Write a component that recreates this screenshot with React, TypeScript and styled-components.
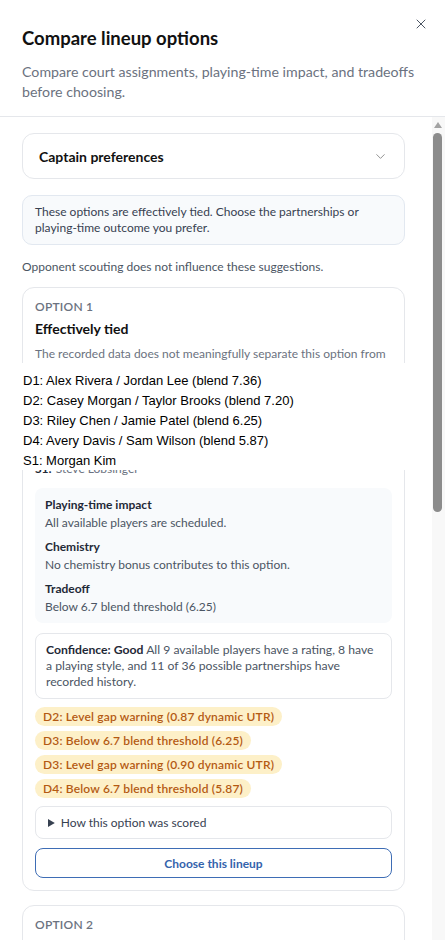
import React from 'react'
import styled, { createGlobalStyle } from 'styled-components'
import { X, ChevronDown } from 'lucide-react'

const GlobalStyle = createGlobalStyle`
  html, body {
    margin: 0;
    padding: 0;
    background: #ffffff;
  }
  body {
    font-family: 'Lato', 'Noto Sans', sans-serif;
    color: #111827;
  }
  * {
    box-sizing: border-box;
  }
`

const Dialog = styled.div`
  height: 100vh;
  display: flex;
  flex-direction: column;
  background: #ffffff;
  overflow: hidden;
`

const Header = styled.header`
  position: relative;
  padding: 24px 22px 14px;
  border-bottom: 1px solid #e5e7eb;
  flex-shrink: 0;
`

const Title = styled.h2`
  margin: 0 0 10px;
  font-size: 18.5px;
  line-height: 28px;
  font-weight: 700;
  color: #111111;
`

const Description = styled.p`
  margin: 0;
  font-size: 14.2px;
  line-height: 20px;
  color: #6b7280;
`

const CloseButton = styled.button`
  position: absolute;
  top: 15px;
  right: 15px;
  width: 18px;
  height: 18px;
  padding: 0;
  border: none;
  background: none;
  color: #4b5563;
  display: flex;
  align-items: center;
  justify-content: center;
  cursor: pointer;
`

const Body = styled.div`
  flex: 1;
  min-height: 0;
  display: flex;
`

const ScrollArea = styled.div`
  flex: 1;
  min-width: 0;
  overflow: hidden;
  padding: 16px 27px 24px 22px;
  display: flex;
  flex-direction: column;
`

const Rail = styled.div`
  width: 13px;
  flex-shrink: 0;
  background: #f8f8f8;
  display: flex;
  flex-direction: column;
  align-items: center;
  padding-top: 5px;
`

const RailArrow = styled.svg`
  display: block;
  margin-left: -1px;
`

const Thumb = styled.div`
  margin-top: 5px;
  margin-left: -2px;
  width: 9px;
  height: 379px;
  border-radius: 5px;
  background: #8c8c8c;
`

const PreferencesToggle = styled.button`
  width: 100%;
  height: 46px;
  padding: 0 16px 0 16px;
  border: 1px solid #e5e7eb;
  border-radius: 12px;
  background: #ffffff;
  display: flex;
  align-items: center;
  justify-content: space-between;
  font-family: inherit;
  font-size: 14px;
  font-weight: 700;
  color: #111111;
  cursor: pointer;
  flex-shrink: 0;

  svg {
    color: #8b8b8b;
  }
`

const Notice = styled.div`
  margin-top: 16px;
  padding: 8px 12px;
  border: 1px solid #e2e8f0;
  border-radius: 10px;
  background: #f8fafc;
  font-size: 12px;
  line-height: 16px;
  color: #374151;
`

const Note = styled.p`
  margin: 14px 0 12px;
  font-size: 12px;
  line-height: 16px;
  color: #4b5563;
`

const OptionCard = styled.article`
  position: relative;
  padding: 11px 12px 12px;
  border: 1px solid #e5e7eb;
  border-radius: 12px;
  background: #ffffff;
  display: flex;
  flex-direction: column;
  flex-shrink: 0;

  & + & {
    margin-top: 14px;
  }
`

const OptionLabel = styled.div`
  font-size: 12px;
  line-height: 16px;
  font-weight: 600;
  letter-spacing: 0.02em;
  text-transform: uppercase;
  color: #6b7280;
`

const OptionTitle = styled.h3`
  margin: 4px 0 0;
  font-size: 14px;
  line-height: 20px;
  font-weight: 700;
  color: #111111;
`

const OptionSummary = styled.p`
  margin: 6px 0 0;
  font-size: 12px;
  line-height: 17px;
  color: #6b7280;
`

const LineupList = styled.ul`
  list-style: none;
  margin: 4px 0 0;
  padding: 0;
`

const LineupRow = styled.li`
  font-size: 12px;
  line-height: 19px;
  color: #6b7280;

  b {
    color: #1f2937;
    font-weight: 700;
    margin-right: 4px;
  }
`

const ImpactPanel = styled.div`
  margin-top: 10px;
  padding: 8px 10px 7px;
  border-radius: 8px;
  background: #f8fafc;
  display: flex;
  flex-direction: column;
  gap: 6px;
`

const ImpactItem = styled.div`
  font-size: 12px;
  line-height: 18px;
`

const ImpactTitle = styled.div`
  font-weight: 700;
  color: #1f2937;
`

const ImpactText = styled.div`
  color: #4b5563;
`

const ConfidenceBox = styled.div`
  margin-top: 10px;
  padding: 8px 10px;
  border: 1px solid #e5e7eb;
  border-radius: 8px;
  font-size: 12.2px;
  line-height: 16px;
  color: #4b5563;

  b {
    color: #1f2937;
    font-weight: 700;
  }
`

const WarningList = styled.div`
  margin-top: 8px;
  display: flex;
  flex-direction: column;
  align-items: flex-start;
  gap: 5px;
`

const WarningPill = styled.span`
  display: inline-block;
  padding: 0 8px;
  height: 19px;
  line-height: 19px;
  border-radius: 10px;
  background: #fdf0c8;
  color: #b45a13;
  font-size: 12px;
  font-weight: 600;
  letter-spacing: 0.17px;
`

const ScoreDetails = styled.details`
  margin-top: 8px;
  padding: 8px 12px 7px;
  border: 1px solid #e5e7eb;
  border-radius: 8px;
  font-size: 12px;
  line-height: 16px;
  color: #374151;

  summary {
    cursor: pointer;
  }
`

const ChooseButton = styled.button`
  margin-top: 9px;
  width: 100%;
  height: 30px;
  border: 1px solid #3e6db5;
  border-radius: 8px;
  background: #ffffff;
  color: #3463ac;
  font-family: inherit;
  font-size: 12px;
  font-weight: 700;
  cursor: pointer;
`

// debug list that sits over the first card
const LineupOverlay = styled.div`
  position: absolute;
  top: 75px;
  left: -22px;
  width: 420px;
  height: 107px;
  padding: 8px 0 0 22px;
  background: #ffffff;
  font-family: 'Liberation Sans', Arial, sans-serif;
  font-size: 13px;
  line-height: 20px;
  color: #000000;
`

interface OptionData {
  label: string
  title: string
  summary: string
  lineup: [string, string][]
  playingTime: string
  chemistry: string
  tradeoff: string
  confidence: string
  confidenceText: string
  warnings: string[]
}

const options: OptionData[] = [
  {
    label: 'Option 1',
    title: 'Effectively tied',
    summary:
      'The recorded data does not meaningfully separate this option from the others.',
    lineup: [
      ['D1:', 'Alex Rivera'],
      ['D2:', 'Casey Morgan'],
      ['D3:', 'Riley Chen'],
      ['D4:', 'Avery Davis'],
      ['S1:', 'Steve Lobsinger'],
    ],
    playingTime: 'All available players are scheduled.',
    chemistry: 'No chemistry bonus contributes to this option.',
    tradeoff: 'Below 6.7 blend threshold (6.25)',
    confidence: 'Good',
    confidenceText:
      'All 9 available players have a rating, 8 have a playing style, and 11 of 36 possible partnerships have recorded history.',
    warnings: [
      'D2: Level gap warning (0.87 dynamic UTR)',
      'D3: Below 6.7 blend threshold (6.25)',
      'D3: Level gap warning (0.90 dynamic UTR)',
      'D4: Below 6.7 blend threshold (5.87)',
    ],
  },
  {
    label: 'Option 2',
    title: 'Effectively tied',
    summary:
      'The recorded data does not meaningfully separate this option from the others.',
    lineup: [
      ['D1:', 'Alex Rivera / Casey Morgan'],
      ['D2:', 'Jordan Lee / Taylor Brooks'],
      ['D3:', 'Riley Chen / Sam Wilson'],
      ['D4:', 'Avery Davis / Jamie Patel'],
      ['S1:', 'Steve Lobsinger'],
    ],
    playingTime: 'All available players are scheduled.',
    chemistry: 'No chemistry bonus contributes to this option.',
    tradeoff: 'Below 6.7 blend threshold (6.31)',
    confidence: 'Good',
    confidenceText:
      'All 9 available players have a rating, 8 have a playing style, and 11 of 36 possible partnerships have recorded history.',
    warnings: [
      'D3: Below 6.7 blend threshold (6.31)',
      'D4: Level gap warning (0.94 dynamic UTR)',
    ],
  },
]

const overlayLines = [
  'D1: Alex Rivera / Jordan Lee (blend 7.36)',
  'D2: Casey Morgan / Taylor Brooks (blend 7.20)',
  'D3: Riley Chen / Jamie Patel (blend 6.25)',
  'D4: Avery Davis / Sam Wilson (blend 5.87)',
  'S1: Morgan Kim',
]

const Option = ({ option, showOverlay }: { option: OptionData; showOverlay?: boolean }) => (
  <OptionCard>
    <OptionLabel>{option.label}</OptionLabel>
    <OptionTitle>{option.title}</OptionTitle>
    <OptionSummary>{option.summary}</OptionSummary>
    <LineupList>
      {option.lineup.map(([court, names]) => (
        <LineupRow key={court}>
          <b>{court}</b>
          {names}
        </LineupRow>
      ))}
    </LineupList>
    <ImpactPanel>
      <ImpactItem>
        <ImpactTitle>Playing-time impact</ImpactTitle>
        <ImpactText>{option.playingTime}</ImpactText>
      </ImpactItem>
      <ImpactItem>
        <ImpactTitle>Chemistry</ImpactTitle>
        <ImpactText>{option.chemistry}</ImpactText>
      </ImpactItem>
      <ImpactItem>
        <ImpactTitle>Tradeoff</ImpactTitle>
        <ImpactText>{option.tradeoff}</ImpactText>
      </ImpactItem>
    </ImpactPanel>
    <ConfidenceBox>
      <b>Confidence: {option.confidence}</b> {option.confidenceText}
    </ConfidenceBox>
    <WarningList>
      {option.warnings.map((w) => (
        <WarningPill key={w}>{w}</WarningPill>
      ))}
    </WarningList>
    <ScoreDetails>
      <summary>How this option was scored</summary>
    </ScoreDetails>
    <ChooseButton>Choose this lineup</ChooseButton>
    {showOverlay && (
      <LineupOverlay>
        {overlayLines.map((line) => (
          <div key={line}>{line}</div>
        ))}
      </LineupOverlay>
    )}
  </OptionCard>
)

const App = () => {
  return (
    <>
      <GlobalStyle />
      <Dialog>
        <Header>
          <Title>Compare lineup options</Title>
          <Description>
            Compare court assignments, playing-time impact, and tradeoffs before choosing.
          </Description>
          <CloseButton aria-label="Close">
            <X size={16} strokeWidth={1.5} />
          </CloseButton>
        </Header>
        <Body>
          <ScrollArea>
            <PreferencesToggle>
              Captain preferences
              <ChevronDown size={15} strokeWidth={1.5} />
            </PreferencesToggle>
            <Notice>
              These options are effectively tied. Choose the partnerships or playing-time
              outcome you prefer.
            </Notice>
            <Note>Opponent scouting does not influence these suggestions.</Note>
            {options.map((option, i) => (
              <Option key={option.label} option={option} showOverlay={i === 0} />
            ))}
          </ScrollArea>
          <Rail aria-hidden="true">
            <RailArrow width="8" height="6" viewBox="0 0 8 6">
              <path d="M4 0L8 6H0z" fill="#a3a3a3" />
            </RailArrow>
            <Thumb />
          </Rail>
        </Body>
      </Dialog>
    </>
  )
}

export default App
